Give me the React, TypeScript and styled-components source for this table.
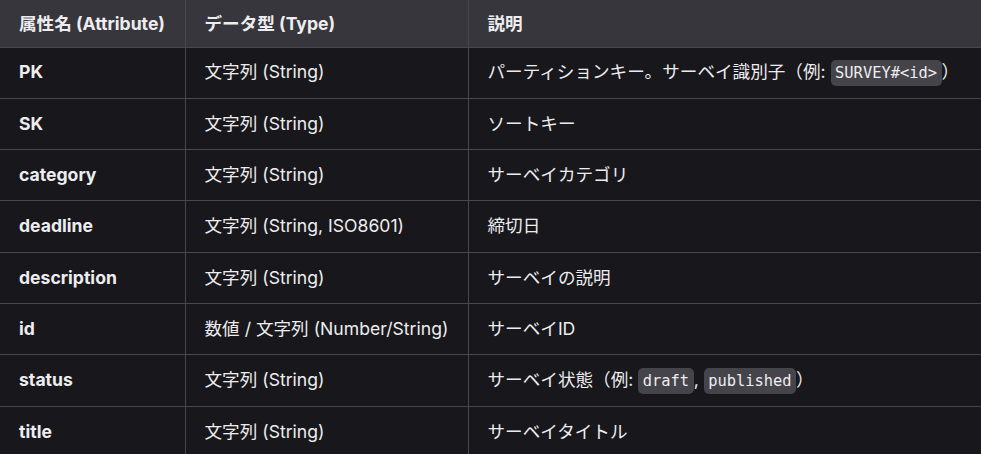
import type { ReactNode } from "react";
import styled, { createGlobalStyle } from "styled-components";

const GlobalStyle = createGlobalStyle`
  html, body {
    margin: 0;
    background: #18171c;
    overflow: hidden;
  }
  body {
    font-family: Inter, "Noto Sans CJK JP", sans-serif;
    color: #ededef;
  }
`;

const Table = styled.table`
  width: 982px;
  border-collapse: collapse;
  table-layout: fixed;
  font-size: 17.6px;
  line-height: 26.4px;
`;

const Th = styled.th`
  height: 47px;
  padding: 1px 19px 0;
  text-align: left;
  font-weight: 700;
  background: #37363c;
  border: 1px solid #48474d;
  border-top: none;
  box-sizing: border-box;
  &:first-child {
    border-left: none;
  }
`;

const Td = styled.td<{ $bold?: boolean }>`
  height: 51.3px;
  padding: 0 19px;
  font-weight: ${(p) => (p.$bold ? 700 : 400)};
  border: 1px solid #48474d;
  box-sizing: border-box;
  white-space: nowrap;
  &:first-child {
    border-left: none;
  }
`;

const Code = styled.code`
  font-family: "DejaVu Sans Mono", monospace;
  font-size: 15.4px;
  background: #45444a;
  border-radius: 5px;
  padding: 4px 4.5px;
`;

type Row = {
  attr: string;
  type: string;
  desc: ReactNode;
};

const rows: Row[] = [
  {
    attr: "PK",
    type: "文字列 (String)",
    desc: (
      <>
        パーティションキー。サーベイ識別子（例: <Code>SURVEY#&lt;id&gt;</Code>）
      </>
    ),
  },
  { attr: "SK", type: "文字列 (String)", desc: "ソートキー" },
  { attr: "category", type: "文字列 (String)", desc: "サーベイカテゴリ" },
  { attr: "deadline", type: "文字列 (String, ISO8601)", desc: "締切日" },
  { attr: "description", type: "文字列 (String)", desc: "サーベイの説明" },
  { attr: "id", type: "数値 / 文字列 (Number/String)", desc: "サーベイID" },
  {
    attr: "status",
    type: "文字列 (String)",
    desc: (
      <>
        サーベイ状態（例: <Code>draft</Code>, <Code>published</Code>）
      </>
    ),
  },
  { attr: "title", type: "文字列 (String)", desc: "サーベイタイトル" },
];

const App = () => {
  return (
    <>
      <GlobalStyle />
      <Table>
        <colgroup>
          <col style={{ width: 185 }} />
          <col style={{ width: 283 }} />
          <col />
        </colgroup>
        <thead>
          <tr>
            <Th>属性名 (Attribute)</Th>
            <Th>データ型 (Type)</Th>
            <Th>説明</Th>
          </tr>
        </thead>
        <tbody>
          {rows.map((r) => (
            <tr key={r.attr}>
              <Td $bold>{r.attr}</Td>
              <Td>{r.type}</Td>
              <Td>{r.desc}</Td>
            </tr>
          ))}
        </tbody>
      </Table>
    </>
  );
};

export default App;
